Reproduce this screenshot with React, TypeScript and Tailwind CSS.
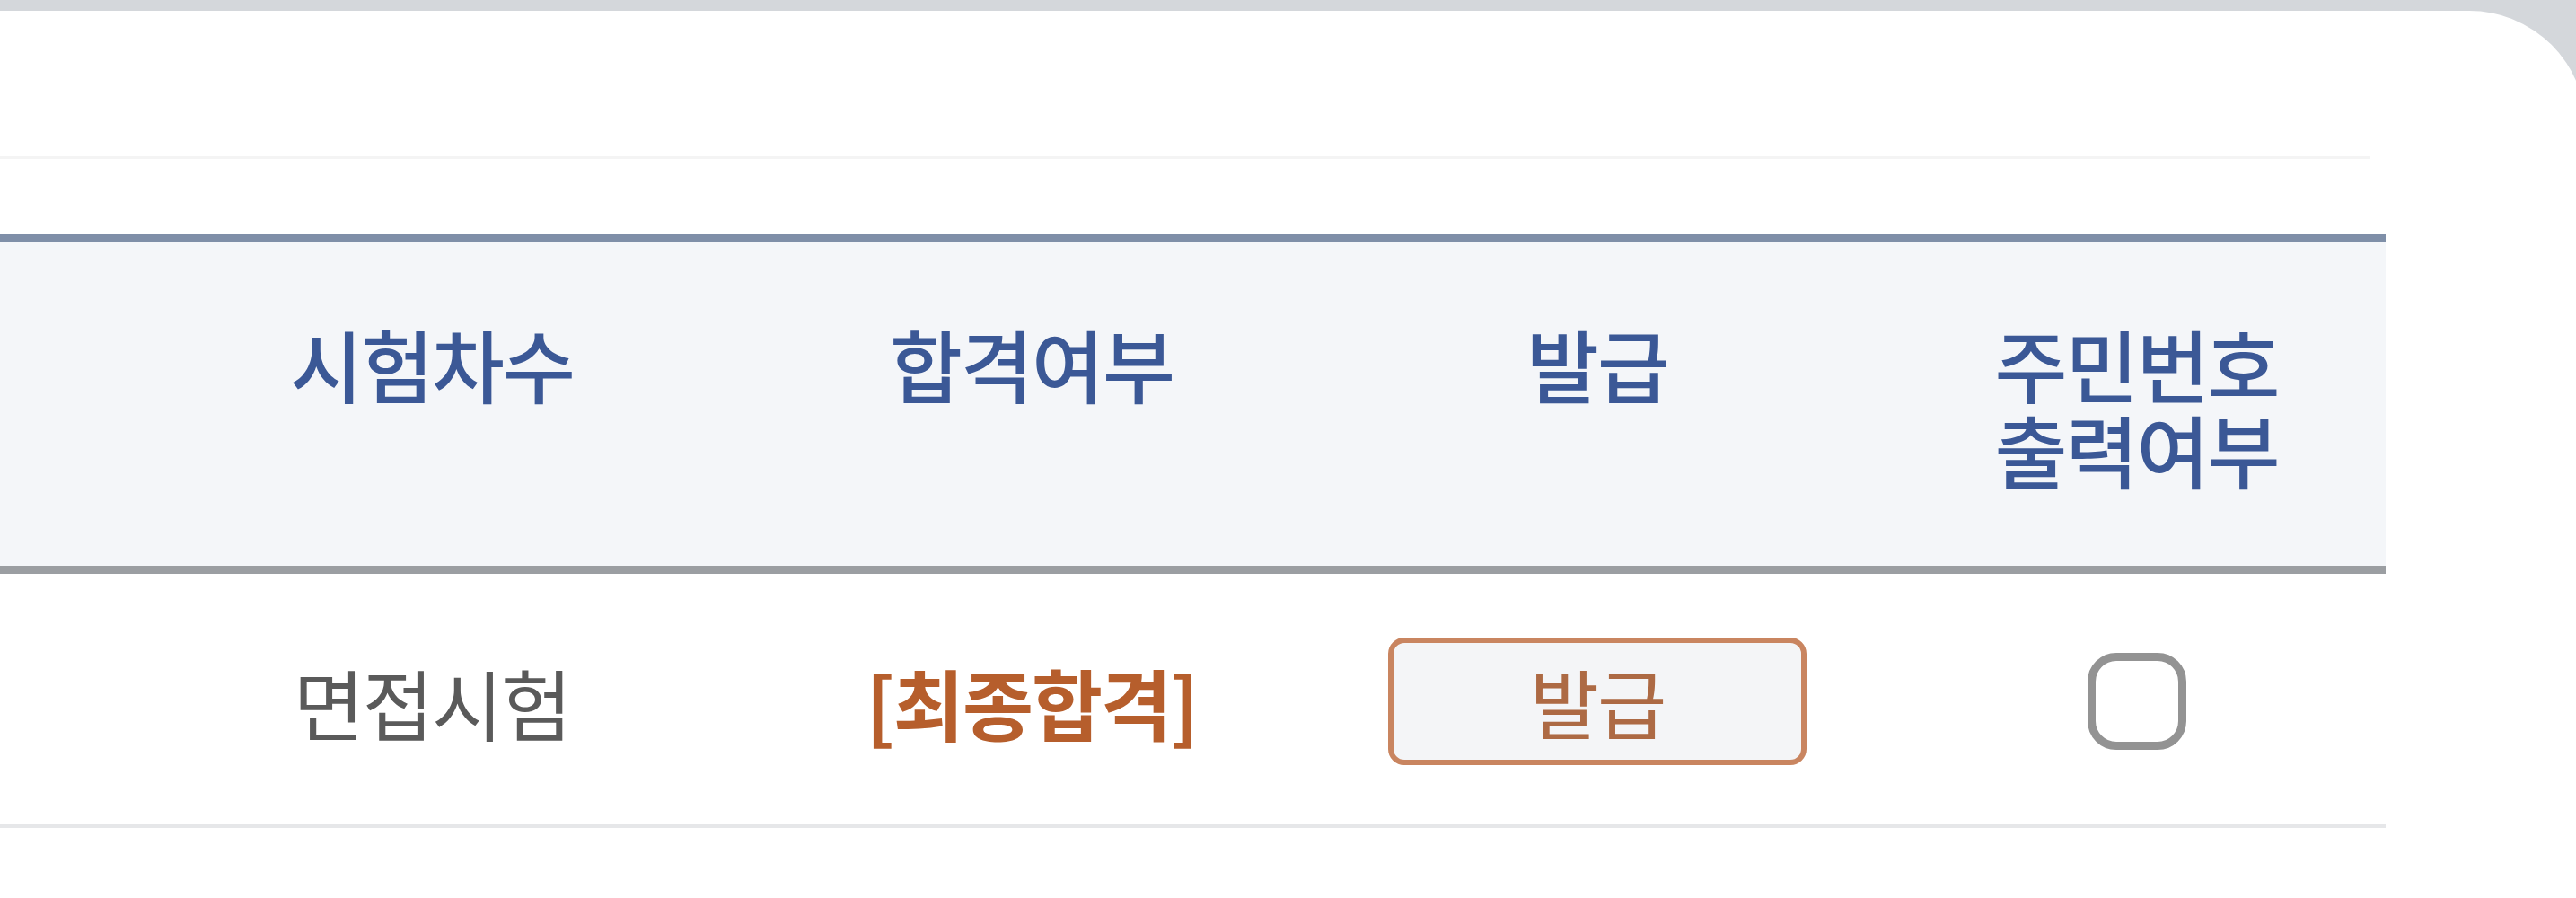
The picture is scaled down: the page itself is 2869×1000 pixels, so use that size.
import React from 'react';

const font = { fontFamily: '"Noto Sans CJK KR", "Noto Sans", sans-serif' };

function Checkbox() {
  return (
    <span className="inline-block w-[110px] h-[108px] rounded-[32px] border-[9px] border-[#939393] bg-white align-middle" />
  );
}

export default function App() {
  return (
    <div className="w-[2869px] h-[1000px] bg-[#d4d7db] pt-[12px] overflow-hidden" style={font}>
      <div className="h-full w-[2880px] bg-white rounded-tr-[130px] pt-[162px]">
        {/* faint divider above the table */}
        <div className="w-[2640px] h-[3px] bg-[#f4f4f4]" />

        <table className="table-fixed w-[2657px] mt-[84px] border-collapse">
          <colgroup>
            <col className="w-[842px]" />
            <col className="w-[614px]" />
            <col className="w-[646px]" />
            <col className="w-[555px]" />
          </colgroup>
          <thead>
            <tr className="bg-[#f4f6f9] border-t-[9px] border-t-[#7f8fa8] border-b-[9px] border-b-[#9b9ea2] align-top">
              <th className="pl-[120px] pt-[86px] pb-[84px] text-[88px] leading-[95px] font-medium tracking-[-2px] text-[#3b5896]">
                시험차수
              </th>
              <th className="pt-[86px] pb-[84px] text-[88px] leading-[95px] font-medium tracking-[-2px] text-[#3b5896]">
                합격여부
              </th>
              <th className="pt-[86px] pb-[84px] text-[88px] leading-[95px] font-medium tracking-[-2px] text-[#3b5896]">
                발급
              </th>
              <th className="pt-[86px] pb-[84px] text-[88px] leading-[95px] font-medium tracking-[-2px] text-[#3b5896]">
                주민번호
                <br />
                출력여부
              </th>
            </tr>
          </thead>
          <tbody>
            <tr className="h-[285px] border-b-[4px] border-b-[#e6e7e9] align-middle">
              <td className="pl-[120px] pt-[6px] text-center text-[86px] tracking-[-2px] text-[#5a5a5a]">면접시험</td>
              <td className="pt-[6px] text-center text-[86px] font-bold tracking-[-2px] text-[#b65e2c]">[최종합격]</td>
              <td className="pt-[6px] text-center">
                <button className="w-[466px] h-[142px] rounded-[18px] border-[6px] border-[#c98560] bg-[#f4f5f7] text-[84px] leading-none tracking-[-2px] text-[#ad6a44]">
                  발급
                </button>
              </td>
              <td className="pt-[6px] text-center">
                <Checkbox />
              </td>
            </tr>
          </tbody>
        </table>
      </div>
    </div>
  );
}
